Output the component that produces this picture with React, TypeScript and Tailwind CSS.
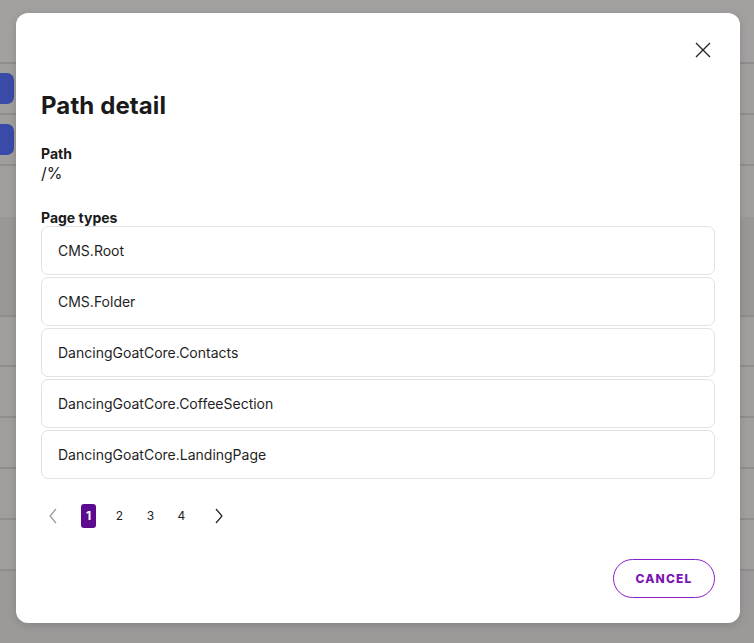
import React from "react";

const rows = [
  "CMS.Root",
  "CMS.Folder",
  "DancingGoatCore.Contacts",
  "DancingGoatCore.CoffeeSection",
  "DancingGoatCore.LandingPage",
];

function BgRow({ h, cls = "bg-[#a09f9e]" }: { h: string; cls?: string }) {
  return <div className={`${h} ${cls} border-b-2 border-[#8f8e8d] w-full`} />;
}

export default function App() {
  return (
    <div
      className="relative w-[754px] h-[643px] overflow-hidden bg-[#a09f9e]"
      style={{ fontFamily: "Inter, 'Noto Sans', sans-serif" }}
    >
      {/* background page (dimmed) */}
      <div className="flex flex-col w-full">
        <div className="h-[64px] bg-[#a3a1a0] border-b-2 border-[#8f8e8d]" />
        <div className="h-[51px] bg-[#a09f9e] border-b-2 border-[#8f8e8d] flex items-center">
          <div className="w-[14px] h-[31px] rounded-r-[7px] bg-[#3a4aa8]" />
        </div>
        <div className="h-[51px] bg-[#a09f9e] border-b-2 border-[#8f8e8d] flex items-center">
          <div className="w-[14px] h-[31px] rounded-r-[7px] bg-[#3a4aa8]" />
        </div>
        <div className="h-[51px] bg-[#a09f9e]" />
        <div className="h-[100px] bg-[#9b9795] border-b-2 border-[#8f8e8d]" />
        <BgRow h="h-[50px]" />
        <BgRow h="h-[51px]" />
        <BgRow h="h-[51px]" />
        <BgRow h="h-[51px]" />
        <BgRow h="h-[51px]" />
        <div className="h-[80px] bg-[#9c9a99]" />
      </div>

      {/* modal */}
      <div className="absolute left-[16px] top-[13px] w-[724px] h-[610px] bg-white rounded-[12px] shadow-[0_2px_8px_rgba(0,0,0,0.15)] flex flex-col px-[25px]">
        <div className="flex justify-end pt-[28px] pr-[3px]">
          <svg width="18" height="18" viewBox="0 0 18 18" className="text-[#222]">
            <path d="M2 2L16 16M16 2L2 16" stroke="currentColor" strokeWidth="1.3" />
          </svg>
        </div>
        <h1 className="mt-[32px] text-[24px] leading-[30px] font-bold text-[#1a1a1a] tracking-[0.1px]">
          Path detail
        </h1>
        <div className="mt-[24px] text-[14px] leading-[18px] font-bold text-[#1a1a1a]">Path</div>
        <div className="text-[16px] leading-[20px] text-[#1a1a1a]">/%</div>
        <div className="mt-[26px] text-[14px] leading-[18px] font-bold text-[#1a1a1a]">Page types</div>
        <div className="flex flex-col gap-[2px] -mt-px">
          {rows.map((r) => (
            <div
              key={r}
              className="h-[49px] border border-[#e2e2e2] rounded-[7px] flex items-center px-[16px] text-[14px] text-[#1f1f1f]"
            >
              {r}
            </div>
          ))}
        </div>
        <div className="flex items-center mt-[25px] h-[24px]">
          <div className="w-[24px] flex justify-center">
            <svg width="10" height="16" viewBox="0 0 10 16">
              <path d="M8 1L2 8L8 15" stroke="#9a9a9a" strokeWidth="1.2" fill="none" />
            </svg>
          </div>
          <div className="ml-[16px] w-[15px] h-[24px] rounded-[3px] bg-[#5c0b8e] text-white text-[12px] font-bold flex items-center justify-center">
            1
          </div>
          <div className="ml-[16px] w-[15px] text-center text-[12px] text-[#222]">2</div>
          <div className="ml-[16px] w-[15px] text-center text-[12px] text-[#222]">3</div>
          <div className="ml-[16px] w-[15px] text-center text-[12px] text-[#222]">4</div>
          <div className="ml-[25px] w-[10px] flex justify-center">
            <svg width="10" height="16" viewBox="0 0 10 16">
              <path d="M2 1L8 8L2 15" stroke="#222" strokeWidth="1.2" fill="none" />
            </svg>
          </div>
        </div>
        <div className="flex justify-end mt-[31px]">
          <button className="w-[102px] h-[39px] rounded-full border border-[#8a1fc9] text-[#7a16b4] text-[12px] font-extrabold tracking-[1.2px]">
            CANCEL
          </button>
        </div>
      </div>
    </div>
  );
}
